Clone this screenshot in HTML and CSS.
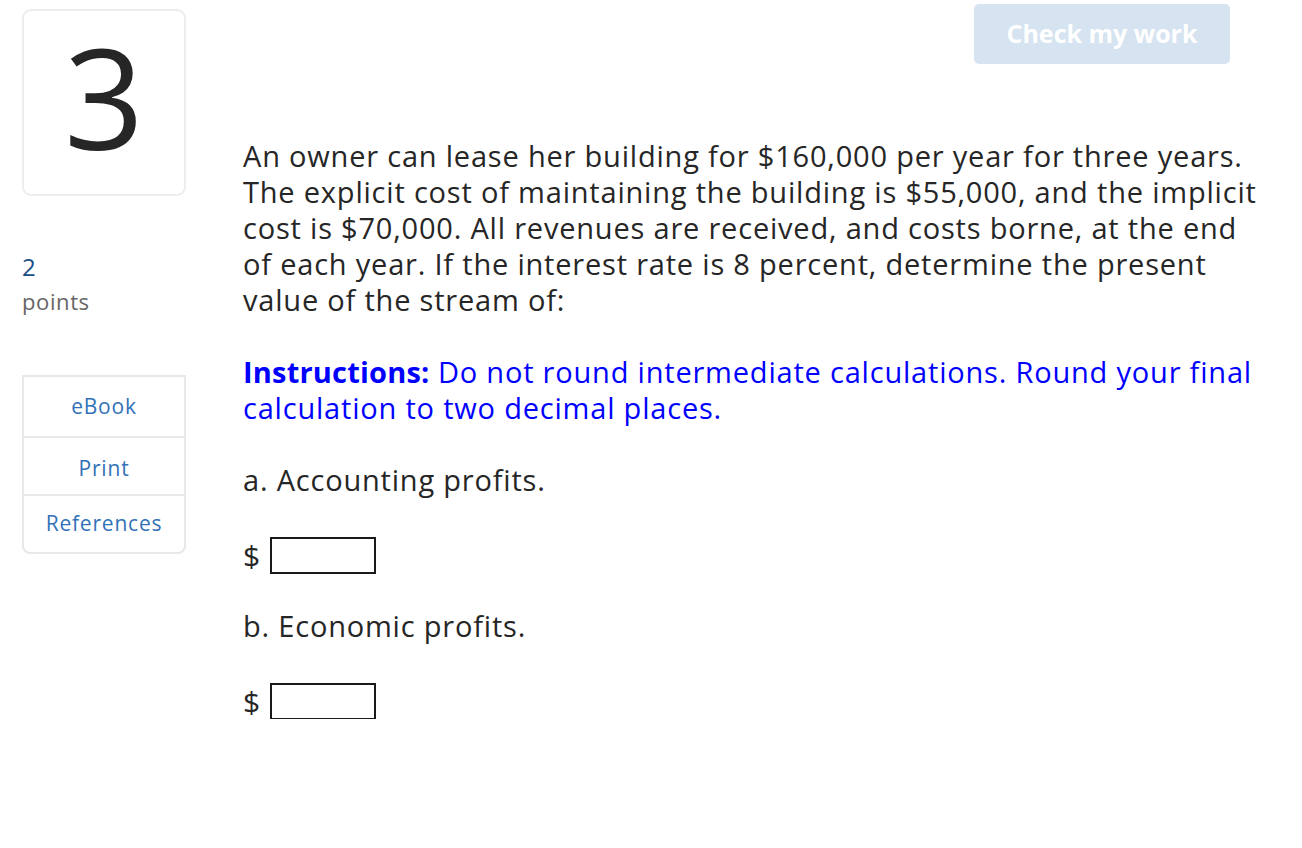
FILE: index.html
```html
<!DOCTYPE html>
<html>
<head>
<meta charset="utf-8">
<link rel="stylesheet" href="styles.css">
</head>
<body>
<div class="page">
  <aside class="side">
    <div class="qnum">3</div>
    <div class="points">
      <div class="pts-val">2</div>
      <div class="pts-label">points</div>
    </div>
    <div class="tools">
      <div class="tool">eBook</div>
      <div class="tool">Print</div>
      <div class="tool">References</div>
    </div>
  </aside>
  <main class="main">
    <div class="topbar">
      <button class="check">Check my work</button>
    </div>
    <p class="question">An owner can lease her building for $160,000 per year for three years. The explicit cost of maintaining the building is $55,000, and the implicit cost is $70,000. All revenues are received, and costs borne, at the end of each year. If the interest rate is 8 percent, determine the present value of the stream of:</p>
    <p class="instructions"><b class="lead">Instructions:</b> Do not round intermediate calculations. Round your final calculation to two decimal places.</p>
    <p class="part">a. Accounting profits.</p>
    <div class="answer"><span class="dollar">$</span><span class="box"></span></div>
    <p class="part part-b">b. Economic profits.</p>
    <div class="answer"><span class="dollar">$</span><span class="box"></span></div>
  </main>
</div>
</body>
</html>
```
FILE: styles.css
```css
html, body {
  margin: 0;
  padding: 0;
  background: #fff;
}
body {
  font-family: "Open Sans", "Liberation Sans", sans-serif;
  color: #262626;
}
.page {
  display: flex;
  padding: 4px 0 0 22px;
}
.side {
  width: 164px;
  flex: none;
  display: flex;
  flex-direction: column;
}
.qnum {
  margin-top: 5px;
  height: 187px;
  box-sizing: border-box;
  border: 2px solid #ededed;
  border-radius: 9px;
  display: flex;
  align-items: center;
  justify-content: center;
  font-size: 140px;
  line-height: 1;
  font-weight: 400;
  color: #262626;
  padding-bottom: 14px;
}
.points {
  margin-top: 54px;
}
.pts-val {
  color: #1b4c86;
  font-size: 24px;
  line-height: 34px;
}
.pts-label {
  color: #666;
  font-size: 22px;
  line-height: 34px;
  letter-spacing: 0.6px;
}
.tools {
  margin-top: 57px;
  border: 2px solid #e8e8e8;
  border-radius: 0 0 8px 8px;
  display: flex;
  flex-direction: column;
}
.tool {
  color: #3271b8;
  font-size: 21px;
  letter-spacing: 0.8px;
  text-align: center;
}
.tool:nth-child(1) { height: 59px; line-height: 59px; }
.tool:nth-child(2) { height: 56px; line-height: 60px; border-top: 2px solid #e8e8e8; }
.tool:nth-child(3) { height: 56px; line-height: 54px; border-top: 2px solid #e8e8e8; }
.main {
  margin-left: 57px;
  width: 1024px;
  flex: none;
}
.topbar {
  display: flex;
  justify-content: flex-end;
  padding-right: 37px;
}
.check {
  width: 256px;
  height: 60px;
  background: #d6e3f0;
  border: none;
  border-radius: 5px;
  color: #fff;
  font-family: "Open Sans", "Liberation Sans", sans-serif;
  font-weight: 700;
  font-size: 25px;
  padding: 0 0 2px;
}
.question,
.instructions,
.part {
  font-size: 29px;
  line-height: 36px;
  letter-spacing: 0.8px;
}
.question {
  margin: 74px 0 0;
}
.instructions {
  margin: 36px 0 0;
  color: #0000ff;
}
.lead {
  letter-spacing: 0.2px;
}
.part {
  margin: 36px 0 0;
}
.answer {
  display: flex;
  align-items: center;
  margin-top: 39px;
  height: 36px;
}
.dollar {
  font-size: 30px;
  width: 27px;
}
.box {
  width: 102px;
  height: 33px;
  border: 2px solid #1a1a1a;
  background: #fff;
}
.part-b {
  margin-top: 35px;
}
```
